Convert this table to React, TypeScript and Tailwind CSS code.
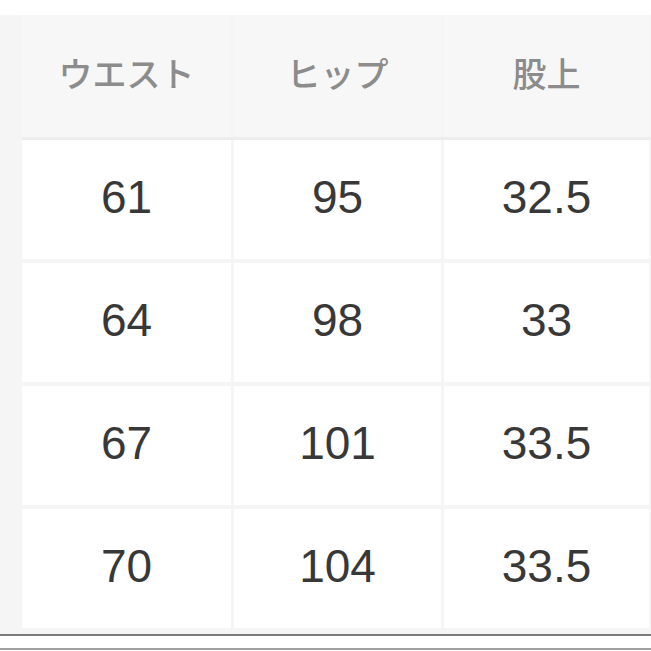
import React from "react";

const headers = ["ウエスト", "ヒップ", "股上"];
const rows = [
  ["61", "95", "32.5"],
  ["64", "98", "33"],
  ["67", "101", "33.5"],
  ["70", "104", "33.5"],
];

export default function App() {
  return (
    <div className="w-[651px] h-[651px] bg-white overflow-hidden flex flex-col">
      <div className="h-[15px] bg-white" />
      <div className="bg-[#f5f5f5] pl-[22px] flex flex-col">
        <div className="grid grid-cols-[209px_207px_205px] gap-x-[3px] h-[122px]">
          {headers.map((h) => (
            <div
              key={h}
              className="bg-[#f7f7f7] flex items-center justify-center pb-[8px] text-[34px] font-medium text-[#8c8c8c]"
              style={{ fontFamily: '"Noto Sans CJK JP", "Noto Sans", sans-serif' }}
            >
              {h}
            </div>
          ))}
        </div>
        <div className="h-[3px] bg-[#ededed]" />
        <div className="flex flex-col gap-[4px]">
          {rows.map((r, i) => (
            <div key={i} className="grid grid-cols-[209px_207px_205px] gap-x-[3px] h-[119px]">
              {r.map((v, j) => (
                <div
                  key={j}
                  className="bg-white flex items-center justify-center pb-[5px] text-[46px] text-[#383838]"
                  style={{ fontFamily: '"Liberation Sans", Arial, sans-serif' }}
                >
                  {v}
                </div>
              ))}
            </div>
          ))}
        </div>
        <div className="h-[6px]" />
      </div>
      <div className="h-[2px] bg-[#7a7a7a]" />
      <div className="h-[12px] bg-white" />
      <div className="h-[2px] bg-[#a0a0a0]" />
      <div className="flex-1 bg-white" />
    </div>
  );
}
